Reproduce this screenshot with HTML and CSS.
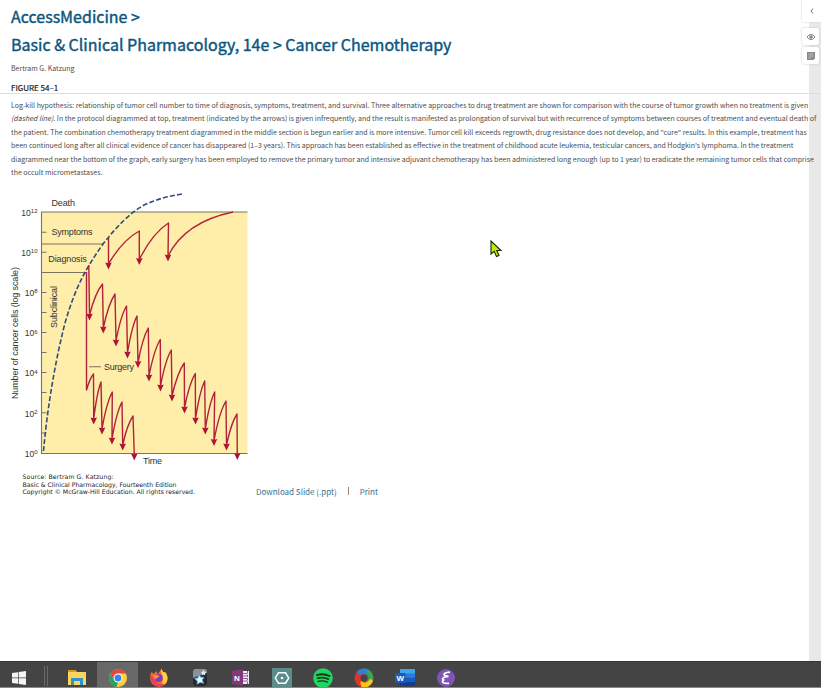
FILE: index.html
```html
<!DOCTYPE html>
<html lang="en">
<head>
<meta charset="utf-8">
<title>AccessMedicine</title>
<link rel="stylesheet" href="styles.css">
</head>
<body>
<main class="page">
  <h1 class="title"><span class="site">AccessMedicine &gt;</span><span class="chapter">Basic &amp; Clinical Pharmacology, 14e &gt; Cancer Chemotherapy</span></h1>
  <p class="author">Bertram G. Katzung</p>
  <h2 class="figure-title">FIGURE 54–1</h2>
  <p class="caption">
    <span class="line l1">Log-kill hypothesis: relationship of tumor cell number to time of diagnosis, symptoms, treatment, and survival. Three alternative approaches to drug treatment are shown for comparison with the course of tumor growth when no treatment is given</span>
    <span class="line l2"><em>(dashed line)</em>. In the protocol diagrammed at top, treatment (indicated by the arrows) is given infrequently, and the result is manifested as prolongation of survival but with recurrence of symptoms between courses of treatment and eventual death of</span>
    <span class="line l3">the patient. The combination chemotherapy treatment diagrammed in the middle section is begun earlier and is more intensive. Tumor cell kill exceeds regrowth, drug resistance does not develop, and "cure" results. In this example, treatment has</span>
    <span class="line l4">been continued long after all clinical evidence of cancer has disappeared (1–3 years). This approach has been established as effective in the treatment of childhood acute leukemia, testicular cancers, and Hodgkin's lymphoma. In the treatment</span>
    <span class="line l5">diagrammed near the bottom of the graph, early surgery has been employed to remove the primary tumor and intensive adjuvant chemotherapy has been administered long enough (up to 1 year) to eradicate the remaining tumor cells that comprise</span>
    <span class="line l6">the occult micrometastases.</span>
  </p>
  <section class="figure">
    <svg class="chart" viewBox="0 185 252 315" width="252" height="315">
      <rect class="plot" x="41.5" y="212" width="206" height="241.5"/>
      <path class="axis" d="M247.500 212H41.500V453.500H247.500M41.500 232.300h5M41.500 252.300h5M41.500 292.500h5M41.500 312.500h5M41.500 332.500h5M41.500 352.500h5M41.500 372.500h5M41.500 392.500h5M41.500 412.800h5M41.500 433h5M41.500 244H104M41.500 272.500H87M89 366.800h12"/>
      <path class="untreated" d="M43.500 451C47 412 54 366 65 323C75 289 84 271 103 244C118 225 130 213 144 205C157 199 169 196 182 194"/>
      <g id="courses"></g>
      <g class="label">
        <text x="51.500" y="206" textLength="23.500">Death</text>
        <text x="51.500" y="235" textLength="41">Symptoms</text>
        <text x="48.300" y="262" textLength="38.500">Diagnosis</text>
        <text x="104" y="370" textLength="30">Surgery</text>
        <text x="143" y="464" textLength="19">Time</text>
        <text transform="translate(57 328) rotate(-90)" textLength="42">Subclinical</text>
        <text transform="translate(18.300 399) rotate(-90)" textLength="132">Number of cancer cells (log scale)</text>
      </g>
      <g class="label tick" id="ticks"></g>
      <g class="source">
        <text x="22.500" y="479" textLength="91">Source: Bertram G. Katzung:</text>
        <text x="22.500" y="486.500" textLength="154">Basic &amp; Clinical Pharmacology, Fourteenth Edition</text>
        <text x="22.500" y="494" textLength="172.500">Copyright © McGraw-Hill Education. All rights reserved.</text>
      </g>
    </svg>
    <nav class="links"><a>Download Slide (.ppt)</a><i class="bar"></i><a>Print</a></nav>
  </section>
</main>
<aside class="rail">
  <div class="toggle"><svg viewBox="0 0 8 8" width="8" height="8"><path d="M5 1.500L3 4L5 6.500" fill="none" stroke="#777"/></svg></div>
  <div class="tool"><svg viewBox="0 0 10 10" width="10" height="10"><path d="M1 5Q5 -.3 9 5Q5 10.300 1 5Z" fill="none" stroke="#888"/><circle cx="5" cy="5" r="1.800" fill="#888"/></svg></div>
  <div class="tool"><svg viewBox="0 0 10 10" width="10" height="10"><path d="M1 1H9V6.500L6.500 9H1Z" fill="#888"/><path d="M2.500 3H7.500M2.500 5H7.500M2.500 7H5" stroke="#ddd" stroke-width=".7"/><path d="M9 7L7 9" stroke="#999"/></svg></div>
</aside>
<svg class="pointer" viewBox="0 0 13 18" width="13" height="18"><path d="M1 1V14L4.200 11.300L6.500 16.500L9 15.400L6.800 10.500H11Z" fill="#b9f000" stroke="#1c2600" stroke-width="1.100"/></svg>
<footer class="taskbar">
  <div class="app start"><svg viewBox="0 0 14 14" width="14" height="14"><path d="M0 2L6 1.200V6.600H0ZM6.700 1.100L14 0V6.600H6.700ZM0 7.300H6V12.800L0 12ZM6.700 7.300H14V14L6.700 12.900Z" fill="#f4f4f4"/></svg></div>
  <div class="divider"></div>
  <div class="app"><svg viewBox="0 0 20 19" width="20" height="19"><path d="M1 2H8L10 4H19V17H1Z" fill="#fbd35f"/><path d="M1 2H8L10 4H1Z" fill="#d99a22"/><path d="M4 10H16V17H13V13H7V17H4Z" fill="#2f93cf"/></svg></div>
  <div class="app active"><svg viewBox="0 0 20 19" width="20" height="19"><circle cx="10" cy="10" r="9" fill="#ffce3d"/><path d="M2.200 5.500A9 9 0 0 1 17.800 5.500H10L6 12.300Z" fill="#dd4b3e"/><path d="M2.200 5.500L6.200 12.300L10 14.500L8.500 18.900A9 9 0 0 1 2.200 5.500Z" fill="#23a365"/><circle cx="10" cy="10" r="4.500" fill="#fff"/><circle cx="10" cy="10" r="3.500" fill="#3f83ee"/></svg></div>
  <div class="app"><svg viewBox="0 0 20 19" width="20" height="19"><path d="M2.500 4L5 6L7 3L9 6L12.500 .8L14 4L16.500 4.500C19 8 19.500 12 17 15.500C13 20 6 19.500 3 15.500C.5 12 1 7 2.500 4Z" fill="#ff6a2a"/><path d="M12.500 .8L14 4L16.500 4.500C19 8 19 12 17 15C15 17 12 16 14 12C15 8 11 6 12.500 .8Z" fill="#ffd43b"/><path d="M2 7C1 12 3 16 7 18C11 19 14 18 16 16C11 17 6 15 5 10Z" fill="#f43b60"/><circle cx="9.600" cy="10" r="4" fill="#7a3cc8"/><path d="M4.500 8Q9 5.500 10.500 9Q7 9 7 11.500Q5 11 4.500 8Z" fill="#ff9b29"/></svg></div>
  <div class="app"><svg viewBox="0 0 20 19" width="20" height="19"><rect x="3" y="1" width="14" height="17" rx="2.500" fill="#8b9195"/><path d="M3 10L17 5V15.500Q17 18 14.500 18H5.500Q3 18 3 15.500Z" fill="#24282b"/><path d="M9 6.500L10.700 9.200L14 9.300L12.300 12L13.500 15.200L10.200 14.400L7.200 16.300L7.200 12.800L4.500 10.600L7.900 9.900Z" fill="#e9f8ff" stroke="#54a9d8"/><path d="M13.500 2L14.300 3.600L16.300 4L15 5.500L15.200 7.200L13.500 6.500L11.800 7.200L12 5.400L10.900 4L12.700 3.600Z" fill="#d8eefa"/></svg></div>
  <div class="app"><svg viewBox="0 0 20 19" width="20" height="19"><rect x="9" y="3" width="9" height="13" fill="#f3e9f5"/><path d="M12 5.500H16M12 8H16M12 10.500H16M12 13H16" stroke="#9a5aa5"/><path d="M16.500 3V16" stroke="#9a5aa5" stroke-dasharray="2.500 1"/><path d="M1 3L12 1V18L1 16Z" fill="#80397b"/><text class="glyph" x="3" y="12.500">N</text></svg></div>
  <div class="app"><svg viewBox="0 0 20 19" width="20" height="19"><rect width="20" height="19" fill="#5b8b8b"/><path d="M6.500 4.800H13.500L16.800 10L13.500 15.200H6.500L3.200 10Z" fill="none" stroke="#fff" stroke-width="1.400"/><circle cx="10" cy="10" r="1.300" fill="#fff"/></svg></div>
  <div class="app"><svg viewBox="0 0 20 19" width="20" height="19"><circle cx="10" cy="10" r="9.800" fill="#1ed760"/><path d="M4 7Q10.500 5 16.500 8" class="wave" stroke-width="1.900"/><path d="M4.500 10.300Q10.500 8.600 15.500 11.200" class="wave" stroke-width="1.600"/><path d="M5 13.300Q10 12 14.500 14.100" class="wave" stroke-width="1.300"/></svg></div>
  <div class="app"><svg viewBox="0 0 20 19" width="20" height="19"><circle cx="10" cy="10" r="9.500" fill="#df3428"/><path d="M3 3.500A9.500 9.500 0 0 1 15 2Q17 6 14 9Q12 4 5 7Q3 5 3 3.500Z" fill="#2582df"/><path d="M14 1.500A9.500 9.500 0 0 1 18.500 14Q15 15 12.500 13Q17 8 12 4.500Q12 2.500 14 1.500Z" fill="#34a853"/><path d="M19 13A9.500 9.500 0 0 1 8 19.300Q5.500 16 7 13Q12 17 16 11Q18 11 19 13Z" fill="#fbc519"/><circle cx="10" cy="10" r="3.500" fill="#444"/></svg></div>
  <div class="app"><svg viewBox="0 0 20 19" width="20" height="19"><rect x="5" y="1" width="15" height="17" rx="1" fill="#41a5ee"/><path d="M5 5.500H20V9.500H5Z" fill="#2b7cd3"/><path d="M5 9.500H20V13.500H5Z" fill="#185abd"/><path d="M5 13.500H20V18H5Z" fill="#103f91"/><rect y="5" width="10.500" height="10" rx="1" fill="#185abd"/><text class="glyph" x="1.500" y="12.500">W</text></svg></div>
  <div class="app"><svg viewBox="0 0 20 19" width="20" height="19"><circle cx="10" cy="10" r="9" fill="#7f55b4"/><path d="M14 4.200C9 4.300 6.500 6.300 9 7.600L12.500 8.300C7.500 8.500 5 11 7.500 12C5 14 7 15.800 13 15.300" fill="none" stroke="#fff" stroke-width="1.700"/></svg></div>
</footer>
<script src="chart.js"></script>
</body>
</html>
```
FILE: styles.css
```css
* { box-sizing: border-box; }
body { margin: 0; width: 821px; height: 700px; overflow: hidden; position: relative; background: #fff; display: flex; flex-direction: column; font-family: "Noto Sans CJK JP", sans-serif; color: #4c4c4c; }
.page { height: 661px; flex: none; position: relative; z-index: 1; }
h1, h2, p { margin: 0; white-space: nowrap; }
.title { padding: 2px 0 0 11px; color: #0b5580; font-size: 16px; line-height: 28px; font-weight: 400; -webkit-text-stroke: .4px #0b5580; }
.title span { display: block; width: max-content; }
.author { padding-left: 11px; margin-top: 3px; font-size: 7px; line-height: 14px; }
.figure-title { padding-left: 11px; margin-top: 3px; height: 16px; border-bottom: 1px solid #dedede; font-size: 8px; line-height: 19px; font-weight: 400; color: #222; -webkit-text-stroke: .2px #222; }
.caption { padding: 5px 0 0 11px; font-size: 7px; line-height: 13.4px; height: 91px; letter-spacing: -.004px; }
.line { display: block; width: max-content; }
.figure { display: flex; align-items: flex-start; }
.chart { display: block; flex: none; }
.plot { fill: #ffedaa; }
.axis { fill: none; stroke: #77765f; stroke-width: 1.1; }
.untreated { fill: none; stroke: #304d7b; stroke-width: 1.6; stroke-dasharray: 5 2.200; }
.course { fill: none; stroke: #b1213c; stroke-width: 1.4; stroke-linejoin: round; }
.arrow { fill: #ad1234; }
.label { font-family: "Liberation Sans", sans-serif; font-size: 9px; fill: #333; }
.tick { font-size: 8.5px; text-anchor: end; }
.tick .exp { font-size: 6px; }
.source { font-family: "DejaVu Sans", sans-serif; font-size: 6.2px; fill: #222; }
.links { display: flex; align-items: center; margin: 299px 0 0 4px; height: 14px; font-size: 8px; color: #33718f; white-space: nowrap; }
.bar { width: 1px; height: 8px; background: #8c8c80; margin: 0 11px; }
.rail { position: absolute; right: 0; top: 0; width: 19px; height: 661px; background: linear-gradient(to right, transparent 7px, #e9e9e9 7px); }
.toggle { height: 22px; background: #fff; display: flex; align-items: center; justify-content: center; box-shadow: 0 0 2px #ccc; }
.tool { width: 17px; height: 17px; margin-top: 6px; background: #fff; border-radius: 2px; box-shadow: 0 0 2px #bbb; display: flex; align-items: center; justify-content: center; }
.tool + .tool { margin-top: 2px; }
.pointer { position: absolute; left: 490px; top: 240px; z-index: 2; }
.taskbar { flex: none; height: 27px; background: #444; border-top: 1px solid #363636; border-bottom: 1px solid #8b8b8b; display: flex; overflow: hidden; }
.app { width: 41px; height: 26px; padding-top: 6px; display: flex; justify-content: center; align-items: flex-start; flex: none; }
.app svg { flex: none; }
.start { width: 38px; padding-top: 9px; }
.divider { width: 4px; height: 20px; margin: 4px 14px 0 6px; border: solid #696969; border-width: 0 1px; }
.divider + .app { width: 29px; margin-right: 6.4px; }
.active { background: #686868; }
.glyph { font: bold 8px "Liberation Sans", sans-serif; fill: #fff; }
.wave { fill: none; stroke: #17351f; stroke-linecap: round; }
```
FILE: chart.js
```js
// Each course lists [peakX, peakY, tipX, tipY]; tumor regrowth curves join a tip to the next peak.
const courses = [
  { start: '', cycles: [[108.5,238,108.5,269],[139.3,231,139.3,264.500],[168.5,223,168,261]], end: [233,212] },
  { start: '', cycles: [[88.8,265,89.5,320],[102.5,284,103.3,333],[115,294,116,346],[126.5,306,127.5,358],[137,316,138,367.5],[148.3,328,149,381],[160.3,339.5,160.5,391],[171.3,350,172,401],[184.3,363,184.5,413],[195.3,373.5,195.5,424],[204.7,381,205.3,434],[214.7,392,214,445.5],[226,401,226.5,450],[237,414,237.3,459.5]] },
  { start: 'M86.5 272V390Q90 378 ', cycles: [[93.5,374,93.7,424],[101,382,102,434],[112.3,392,112,444],[122,402,122.7,450],[133,416,134.3,460]] }
];
const tag = (name, cls, attrs) => {
  const el = document.createElementNS('http://www.w3.org/2000/svg', name);
  el.setAttribute('class', cls);
  for (const k in attrs) el.setAttribute(k, attrs[k]);
  return el;
};
const root = document.getElementById('courses');
for (const { start, cycles, end } of courses) {
  let d = start, prev = null;
  const rise = (x, y) => `Q${prev[0] + (x - prev[0]) * .45} ${y + (prev[1] - y) * .28} ${x} ${y}`;
  for (const [px, py, tx, ty] of cycles) {
    if (prev) d += rise(px, py);
    else d += (start ? '' : 'M') + `${px} ${py}`;
    d += `L${tx} ${ty - 5}`;
    prev = [tx, ty - 5];
    root.append(tag('path', 'arrow', { d: `M${tx} ${ty + .5}l-3.3 -7q3.3 1.200 6.600 0z` }));
  }
  if (end) d += `Q185 222 ${end[0]} ${end[1]}`;
  root.append(tag('path', 'course', { d }));
}
const ticks = document.getElementById('ticks');
[12, 10, 8, 6, 4, 2, 0].forEach((n, i) => {
  const t = tag('text', '', { x: 37.5, y: 215.5 + i * 40.2 });
  t.textContent = '10';
  const e = tag('tspan', 'exp', { dy: -2.5 });
  e.textContent = n;
  t.append(e);
  ticks.append(t);
});
```
